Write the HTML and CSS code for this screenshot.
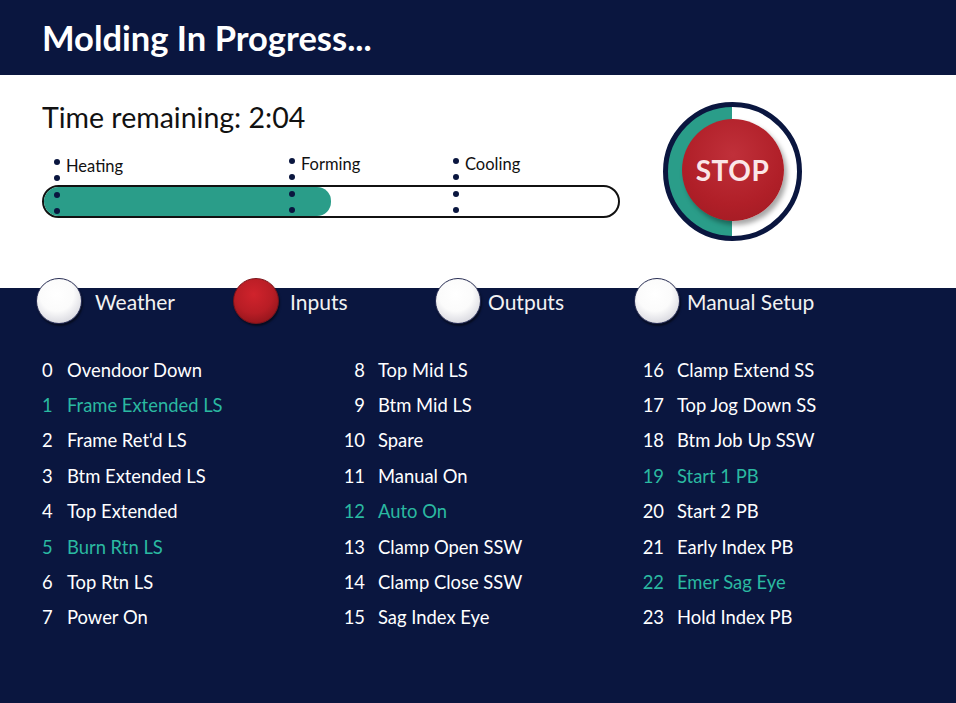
FILE: index.html
```html
<!DOCTYPE html>
<html>
<head>
<meta charset="utf-8">
<link rel="stylesheet" href="styles.css">
</head>
<body>
<header class="header"><h1 class="title">Molding In Progress...</h1></header>
<section class="status">
  <div class="progress-panel">
    <div class="time">Time remaining: 2:04</div>
    <div class="progress">
      <div class="phase phase-heating"><span class="dots"><i></i><i></i><i></i><i></i></span><span class="phase-label">Heating</span></div>
      <div class="phase phase-forming"><span class="dots"><i></i><i></i><i></i><i></i></span><span class="phase-label">Forming</span></div>
      <div class="phase phase-cooling"><span class="dots"><i></i><i></i><i></i><i></i></span><span class="phase-label">Cooling</span></div>
      <div class="bar"><div class="bar-fill" style="width:50%"></div></div>
    </div>
  </div>
  <div class="stop-ring"><div class="stop-btn">STOP</div></div>
</section>
<section class="panel">
  <nav class="tabs">
    <div class="tab"><span class="knob"></span><span class="tab-label">Weather</span></div>
    <div class="tab tab-mid"><span class="knob knob-active"></span><span class="tab-label">Inputs</span></div>
    <div class="tab tab-tight"><span class="knob"></span><span class="tab-label">Outputs</span></div>
    <div class="tab tab-tight"><span class="knob"></span><span class="tab-label">Manual Setup</span></div>
  </nav>
  <div class="io-grid">
    <ul class="io-col col-a">
      <li><span class="num">0</span><span>Ovendoor Down</span></li>
      <li class="on"><span class="num">1</span><span>Frame Extended LS</span></li>
      <li><span class="num">2</span><span>Frame Ret'd LS</span></li>
      <li><span class="num">3</span><span>Btm Extended LS</span></li>
      <li><span class="num">4</span><span>Top Extended</span></li>
      <li class="on"><span class="num">5</span><span>Burn Rtn LS</span></li>
      <li><span class="num">6</span><span>Top Rtn LS</span></li>
      <li><span class="num">7</span><span>Power On</span></li>
    </ul>
    <ul class="io-col col-b">
      <li><span class="num">8</span><span>Top Mid LS</span></li>
      <li><span class="num">9</span><span>Btm Mid LS</span></li>
      <li><span class="num">10</span><span>Spare</span></li>
      <li><span class="num">11</span><span>Manual On</span></li>
      <li class="on"><span class="num">12</span><span>Auto On</span></li>
      <li><span class="num">13</span><span>Clamp Open SSW</span></li>
      <li><span class="num">14</span><span>Clamp Close SSW</span></li>
      <li><span class="num">15</span><span>Sag Index Eye</span></li>
    </ul>
    <ul class="io-col col-c">
      <li><span class="num">16</span><span>Clamp Extend SS</span></li>
      <li><span class="num">17</span><span>Top Jog Down SS</span></li>
      <li><span class="num">18</span><span>Btm Job Up SSW</span></li>
      <li class="on"><span class="num">19</span><span>Start 1 PB</span></li>
      <li><span class="num">20</span><span>Start 2 PB</span></li>
      <li><span class="num">21</span><span>Early Index PB</span></li>
      <li class="on"><span class="num">22</span><span>Emer Sag Eye</span></li>
      <li><span class="num">23</span><span>Hold Index PB</span></li>
    </ul>
  </div>
</section>
</body>
</html>
```
FILE: styles.css
```css
* { box-sizing: border-box; }
html, body { margin: 0; padding: 0; }
body {
  width: 956px;
  height: 703px;
  overflow: hidden;
  background: #0a163f;
  font-family: Lato, "Open Sans", sans-serif;
  color: #fff;
}
.header {
  height: 75px;
  background: #0a163f;
  padding-left: 42px;
  display: flex;
  align-items: center;
}
.title {
  margin: 0;
  font-size: 34.5px;
  font-weight: 700;
  color: #fff;
}
.status {
  height: 213px;
  background: #fff;
  color: #111;
  display: flex;
  padding-left: 42px;
}
.progress-panel {
  width: 578px;
  padding-top: 22px;
}
.time {
  font-size: 28.5px;
  line-height: 40px;
  color: #111;
}
.progress {
  position: relative;
  margin-top: 21px;
  height: 60px;
}
.bar {
  position: absolute;
  left: 0;
  right: 0;
  bottom: 0;
  height: 33px;
  border: 2px solid #111;
  border-radius: 17px;
  overflow: hidden;
}
.bar-fill {
  height: 100%;
  background: #2a9d89;
  border-radius: 0 14px 14px 0;
}
.phase {
  position: absolute;
  top: 0;
  display: flex;
  align-items: flex-start;
  z-index: 2;
}
.phase-heating { left: 12px; top: 1px; }
.phase-forming { left: 247px; }
.phase-cooling { left: 411px; }
.dots {
  display: flex;
  flex-direction: column;
  gap: 10.4px;
}
.dots i {
  display: block;
  width: 6px;
  height: 6px;
  border-radius: 50%;
  background: #0a163f;
}
.phase-label {
  margin-left: 6px;
  margin-top: -3px;
  font-size: 16.5px;
  line-height: 18px;
  color: #111;
}
.phase-heating .phase-label { margin-top: -2px; }
.stop-ring {
  margin-left: 43px;
  margin-top: 27px;
  width: 139px;
  height: 139px;
  border-radius: 50%;
  border: 5px solid #0a163f;
  background: linear-gradient(to right, #2a9d89 50%, #fff 50%);
  display: flex;
  align-items: center;
  justify-content: center;
}
.stop-btn {
  width: 102px;
  height: 102px;
  margin-top: -4px;
  border-radius: 50%;
  background: radial-gradient(circle at 50% 35%, #c0303a 0%, #b01f28 60%, #9e1a22 100%);
  box-shadow: 3px 4px 5px rgba(0,0,0,0.35);
  display: flex;
  align-items: center;
  justify-content: center;
  color: #fbe6e8;
  font-weight: 700;
  font-size: 28px;
  letter-spacing: 0.5px;
}
.panel {
  background: #0a163f;
  display: flow-root;
}
.tabs {
  display: grid;
  grid-template-columns: 197px 202px 199px 200px;
  padding-left: 36px;
  margin-top: -10px;
  height: 45px;
}
.tab {
  display: flex;
  align-items: center;
  gap: 13px;
}
.tab-mid { gap: 11px; }
.tab-tight { gap: 7px; }
.knob {
  width: 46px;
  height: 46px;
  border-radius: 50%;
  background: radial-gradient(circle at 45% 35%, #ffffff 0%, #fbfbfb 45%, #d8d8df 80%, #a9a9b4 100%);
  border: 1.5px solid #2a2f55;
  box-shadow: 1px 2px 2px rgba(0,0,0,0.5);
  flex: none;
}
.knob-active {
  background: radial-gradient(circle at 45% 35%, #d0232c 0%, #b81d25 50%, #8e141b 85%, #6e0f14 100%);
  border-color: #7a1218;
}
.tab-label {
  font-size: 21px;
  color: #f2f2f2;
}
.io-grid {
  display: grid;
  grid-template-columns: 301px 299px 250px;
  padding-left: 42px;
  margin-top: 29px;
}
.io-col {
  list-style: none;
  margin: 0;
  padding: 0;
}
.io-col li {
  display: flex;
  gap: 13px;
  height: 35.4px;
  align-items: center;
  font-size: 18.4px;
  color: #fff;
}
.io-col li.on { color: #2ab9a1; }
.num { text-align: right; }
.col-a .num { width: 12px; text-align: left; }
.col-b .num, .col-c .num { width: 22px; }
```
